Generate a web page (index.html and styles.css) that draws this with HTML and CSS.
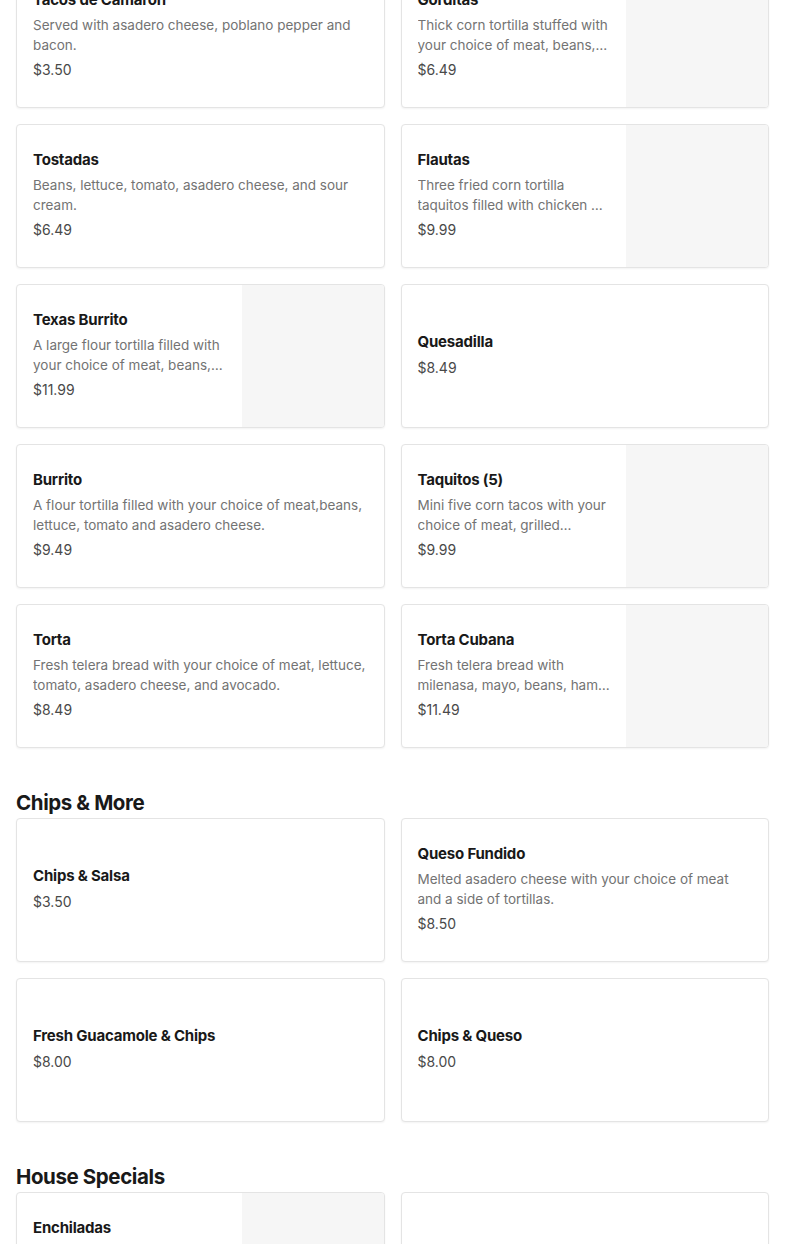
FILE: index.html
```html
<!DOCTYPE html>
<html>
<head>
<meta charset="utf-8">
<link rel="stylesheet" href="styles.css">
</head>
<body>
<main class="menu">
  <section class="section first">
    <div class="grid">
      <div class="card">
        <div class="info">
          <div class="title">Tacos de Camarón</div>
          <div class="desc">Served with asadero cheese, poblano pepper and bacon.</div>
          <div class="price">$3.50</div>
        </div>
      </div>
      <div class="card">
        <div class="info">
          <div class="title">Gorditas</div>
          <div class="desc">Thick corn tortilla stuffed with your choice of meat, beans, lettuce, tomato and cheese.</div>
          <div class="price">$6.49</div>
        </div>
        <div class="photo"></div>
      </div>
      <div class="card">
        <div class="info">
          <div class="title">Tostadas</div>
          <div class="desc">Beans, lettuce, tomato, asadero cheese, and sour cream.</div>
          <div class="price">$6.49</div>
        </div>
      </div>
      <div class="card">
        <div class="info">
          <div class="title">Flautas</div>
          <div class="desc">Three fried corn tortilla taquitos filled with chicken or beef, topped with lettuce and sour cream.</div>
          <div class="price">$9.99</div>
        </div>
        <div class="photo"></div>
      </div>
      <div class="card">
        <div class="info">
          <div class="title">Texas Burrito</div>
          <div class="desc">A large flour tortilla filled with your choice of meat, beans, rice, lettuce, tomato and cheese.</div>
          <div class="price">$11.99</div>
        </div>
        <div class="photo"></div>
      </div>
      <div class="card">
        <div class="info">
          <div class="title">Quesadilla</div>
          <div class="price">$8.49</div>
        </div>
      </div>
      <div class="card">
        <div class="info">
          <div class="title">Burrito</div>
          <div class="desc">A flour tortilla filled with your choice of meat,beans, lettuce, tomato and asadero cheese.</div>
          <div class="price">$9.49</div>
        </div>
      </div>
      <div class="card">
        <div class="info">
          <div class="title">Taquitos (5)</div>
          <div class="desc">Mini five corn tacos with your choice of meat, grilled onions, cilantro and salsa.</div>
          <div class="price">$9.99</div>
        </div>
        <div class="photo"></div>
      </div>
      <div class="card">
        <div class="info">
          <div class="title">Torta</div>
          <div class="desc">Fresh telera bread with your choice of meat, lettuce, tomato, asadero cheese, and avocado.</div>
          <div class="price">$8.49</div>
        </div>
      </div>
      <div class="card">
        <div class="info">
          <div class="title">Torta Cubana</div>
          <div class="desc">Fresh telera bread with milenasa, mayo, beans, ham, sausage, lettuce, tomato and cheese.</div>
          <div class="price">$11.49</div>
        </div>
        <div class="photo"></div>
      </div>
    </div>
  </section>

  <section class="section">
    <h2 class="heading">Chips &amp; More</h2>
    <div class="grid">
      <div class="card">
        <div class="info">
          <div class="title">Chips &amp; Salsa</div>
          <div class="price">$3.50</div>
        </div>
      </div>
      <div class="card">
        <div class="info">
          <div class="title">Queso Fundido</div>
          <div class="desc">Melted asadero cheese with your choice of meat and a side of tortillas.</div>
          <div class="price">$8.50</div>
        </div>
      </div>
      <div class="card">
        <div class="info">
          <div class="title">Fresh Guacamole &amp; Chips</div>
          <div class="price">$8.00</div>
        </div>
      </div>
      <div class="card">
        <div class="info">
          <div class="title">Chips &amp; Queso</div>
          <div class="price">$8.00</div>
        </div>
      </div>
    </div>
  </section>

  <section class="section">
    <h2 class="heading">House Specials</h2>
    <div class="grid">
      <div class="card">
        <div class="info">
          <div class="title">Enchiladas</div>
          <div class="desc">Three corn tortillas filled with your choice of meat, topped with sauce and cheese.</div>
          <div class="price">$10.99</div>
        </div>
        <div class="photo"></div>
      </div>
      <div class="card">
        <div class="info fading">
          <div class="title">Carne Asada Plate</div>
          <div class="price">$13.99</div>
        </div>
      </div>
    </div>
  </section>
</main>
</body>
</html>
```

FILE: styles.css
```css
* { box-sizing: border-box; }
html, body { margin: 0; padding: 0; background: #fff; }
body {
  font-family: Inter, "Noto Sans", "Liberation Sans", sans-serif;
  color: #191919;
  overflow: hidden;
}
.menu { padding: 0 16px; }
.section.first { margin-top: -36px; }
.section { margin-top: 38px; }
.heading {
  margin: 0;
  padding-top: 1px;
  font-size: 20.5px;
  line-height: 31px;
  font-weight: 700;
  letter-spacing: -0.4px;
  color: #191919;
}
.grid {
  display: grid;
  grid-template-columns: 1fr 1fr;
  gap: 16px;
}
.card {
  display: flex;
  height: 144px;
  border: 1px solid #e4e4e4;
  border-radius: 4px;
  box-shadow: 0 1px 2px rgba(0,0,0,0.05);
  overflow: hidden;
  background: #fff;
}
.info {
  flex: 1;
  min-width: 0;
  display: flex;
  flex-direction: column;
  justify-content: center;
  padding: 0 16px 4px 16px;
}
.photo {
  width: 142px;
  flex: none;
  background: #f6f6f6;
}
.title {
  font-size: 15px;
  line-height: 24px;
  font-weight: 700;
  letter-spacing: -0.2px;
  color: #191919;
}
.desc {
  margin-top: 3px;
  font-size: 13.5px;
  line-height: 20px;
  color: #737373;
  display: -webkit-box;
  -webkit-line-clamp: 2;
  -webkit-box-orient: vertical;
  overflow: hidden;
}
.price {
  margin-top: 4px;
  font-size: 14px;
  line-height: 20px;
  color: #494949;
}
.desc + .price { margin-top: 5px; }
.fading {
  opacity: 0.08;
  padding-top: 30px;
}
```
